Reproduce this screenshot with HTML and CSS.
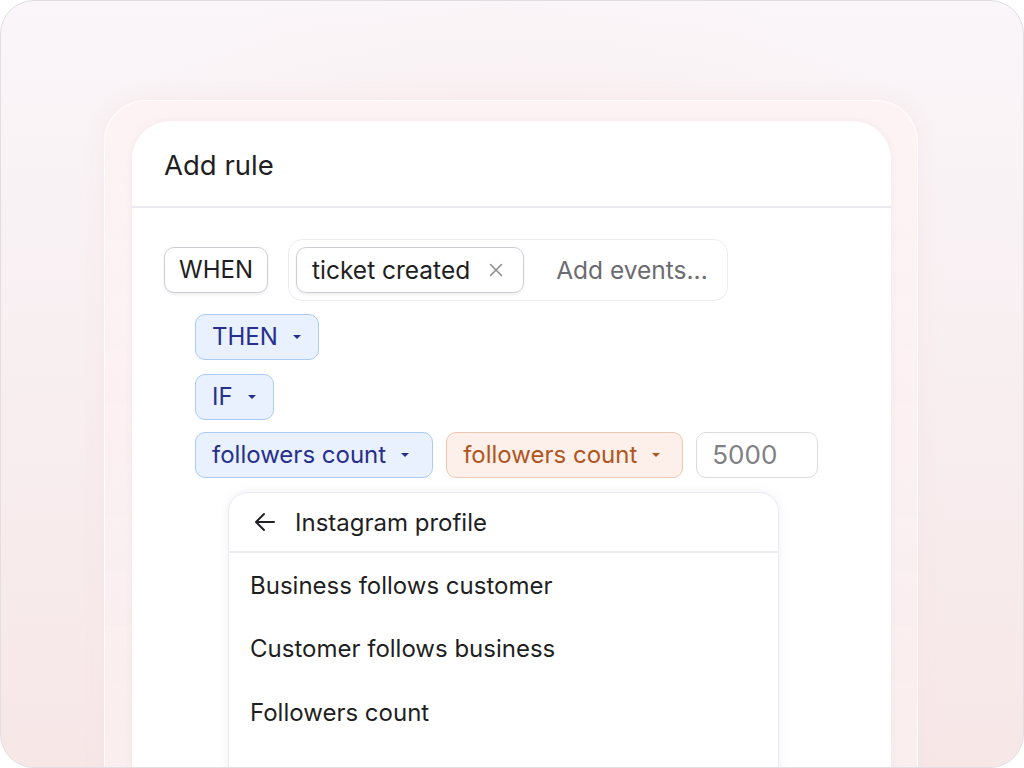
FILE: index.html
```html
<!DOCTYPE html>
<html lang="en">
<head>
<meta charset="utf-8">
<title>Add rule</title>
<link rel="stylesheet" href="styles.css">
</head>
<body>
<div class="frame">
  <div class="halo">
    <div class="card">
      <div class="card-head">Add rule</div>
      <div class="card-body">
        <div class="row-when">
          <div class="pill pill-plain">WHEN</div>
          <div class="events">
            <div class="chip">ticket created
              <svg class="x" width="14" height="14" viewBox="0 0 14 14"><path d="M1.5 1.5L12.5 12.5M12.5 1.5L1.5 12.5" stroke="#8d8d92" stroke-width="1.6" stroke-linecap="round"/></svg>
            </div>
            <span class="placeholder">Add events...</span>
          </div>
        </div>
        <div class="nested">
          <div class="pill pill-blue">THEN <svg class="caret" width="10" height="6" viewBox="0 0 10 6"><path d="M1 1h8L5 5z" fill="currentColor"/></svg></div>
          <div class="pill pill-blue">IF <svg class="caret" width="10" height="6" viewBox="0 0 10 6"><path d="M1 1h8L5 5z" fill="currentColor"/></svg></div>
          <div class="row-cond">
            <div class="pill pill-blue pill-wide">followers count <svg class="caret" width="10" height="6" viewBox="0 0 10 6"><path d="M1 1h8L5 5z" fill="currentColor"/></svg></div>
            <div class="pill pill-orange pill-wide">followers count <svg class="caret" width="10" height="6" viewBox="0 0 10 6"><path d="M1 1h8L5 5z" fill="currentColor"/></svg></div>
            <div class="pill pill-input">5000</div>
          </div>
          <div class="menu">
            <div class="menu-head">
              <svg width="22" height="20" viewBox="0 0 22 20"><path d="M20 10H2.5M10 2L2 10l8 8" fill="none" stroke="#222226" stroke-width="2" stroke-linecap="round" stroke-linejoin="round"/></svg>
              <span>Instagram profile</span>
            </div>
            <div class="menu-item">Business follows customer</div>
            <div class="menu-item">Customer follows business</div>
            <div class="menu-item">Followers count</div>
          </div>
        </div>
      </div>
    </div>
  </div>
</div>
</body>
</html>
```
FILE: styles.css
```css
* { box-sizing: border-box; }
html, body { margin: 0; padding: 0; background: #ffffff; }
body {
  font-family: Inter, "Noto Sans", "Liberation Sans", sans-serif;
  color: #222226;
  width: 1024px;
  height: 768px;
  overflow: hidden;
}
.frame {
  width: 1024px;
  height: 768px;
  border: 1px solid #e2dee2;
  border-radius: 34px;
  overflow: hidden;
  background:
    radial-gradient(ellipse 60% 50% at 50% 30%, rgba(250, 232, 232, 0.55), rgba(250, 232, 232, 0) 70%),
    linear-gradient(180deg, #faf6f9 0%, #f8eff1 45%, #f7e7e7 100%);
  padding: 99px 0 0 103px;
}
.halo {
  width: 814px;
  height: 720px;
  border-radius: 42px 42px 0 0;
  background: linear-gradient(180deg, rgba(253, 243, 244, 0.9), rgba(250, 238, 239, 0.85));
  border: 1px solid rgba(255, 255, 255, 0.9);
  border-bottom: none;
  box-shadow: 0 0 20px rgba(248, 225, 228, 0.6);
  padding: 20px 0 0 27px;
}
.card {
  width: 759px;
  height: 700px;
  background: #ffffff;
  border-radius: 38px 38px 0 0;
  box-shadow: 0 0 6px rgba(240, 225, 232, 0.7);
}
.card-head {
  height: 87px;
  padding: 28px 0 0 32px;
  font-size: 27.5px;
  line-height: 32px;
  color: #1f1f23;
  border-bottom: 2px solid #e9e9f0;
}
.card-body {
  padding: 31px 0 0 32px;
  display: flex;
  flex-direction: column;
  gap: 13px;
}
.row-when {
  display: flex;
  align-items: center;
  gap: 20px;
}
.pill {
  display: inline-flex;
  align-items: center;
  height: 46px;
  padding: 0 14px;
  border-radius: 10px;
  font-size: 24px;
  line-height: 1;
  white-space: nowrap;
}
.pill-plain {
  border: 1px solid #cdcdd9;
  background: #fff;
  box-shadow: 0 2px 3px rgba(30, 30, 60, 0.07);
  color: #1f1f23;
}
.events {
  display: flex;
  align-items: center;
  height: 62px;
  padding: 0 19px 0 7px;
  border: 1.5px solid #ededf1;
  border-radius: 14px;
  gap: 32px;
}
.chip {
  display: inline-flex;
  align-items: center;
  height: 46px;
  padding: 0 20px 0 15px;
  border: 1px solid #cdcdd9;
  border-radius: 10px;
  box-shadow: 0 2px 3px rgba(30, 30, 60, 0.07);
  font-size: 24.5px;
  color: #1f1f23;
  gap: 19px;
}
.placeholder {
  font-size: 24.5px;
  color: #6b6b70;
}
.nested {
  padding-left: 31px;
  display: flex;
  flex-direction: column;
  align-items: flex-start;
  gap: 14px;
}
.pill-blue {
  background: #e9f1fe;
  border: 1.5px solid #a9cbf7;
  color: #272f8e;
  gap: 14px;
  padding: 0 16px 0 16px;
}
.pill-blue.pill-wide { padding-right: 22px; }
.pill-orange {
  background: #fdf0eb;
  border: 1.5px solid #efc6b1;
  color: #b0561f;
  gap: 14px;
  padding: 0 21px 0 16px;
}
.caret { display: block; }
.row-cond {
  display: flex;
  gap: 13px;
  margin-top: -2px;
}
.pill-input {
  width: 122px;
  border: 1.5px solid #dcdce0;
  background: #fff;
  color: #808084;
  font-size: 26px;
  padding: 0 15px;
}
.menu {
  margin-left: 33px;
  width: 551px;
  height: 300px;
  border: 1.5px solid #ebebf1;
  border-radius: 20px;
  box-shadow: 0 0 8px rgba(210, 210, 230, 0.35);
  background: #fff;
}
.menu-head {
  height: 60px;
  display: flex;
  align-items: center;
  gap: 19px;
  padding: 0 0 0 25px;
  border-bottom: 2px solid #ececf0;
  font-size: 24px;
  color: #1f1f23;
}
.menu-item {
  height: 63.5px;
  display: flex;
  align-items: center;
  padding-left: 21px;
  font-size: 24px;
  color: #1f1f23;
}
.menu-head + .menu-item { height: 64px; }
```
